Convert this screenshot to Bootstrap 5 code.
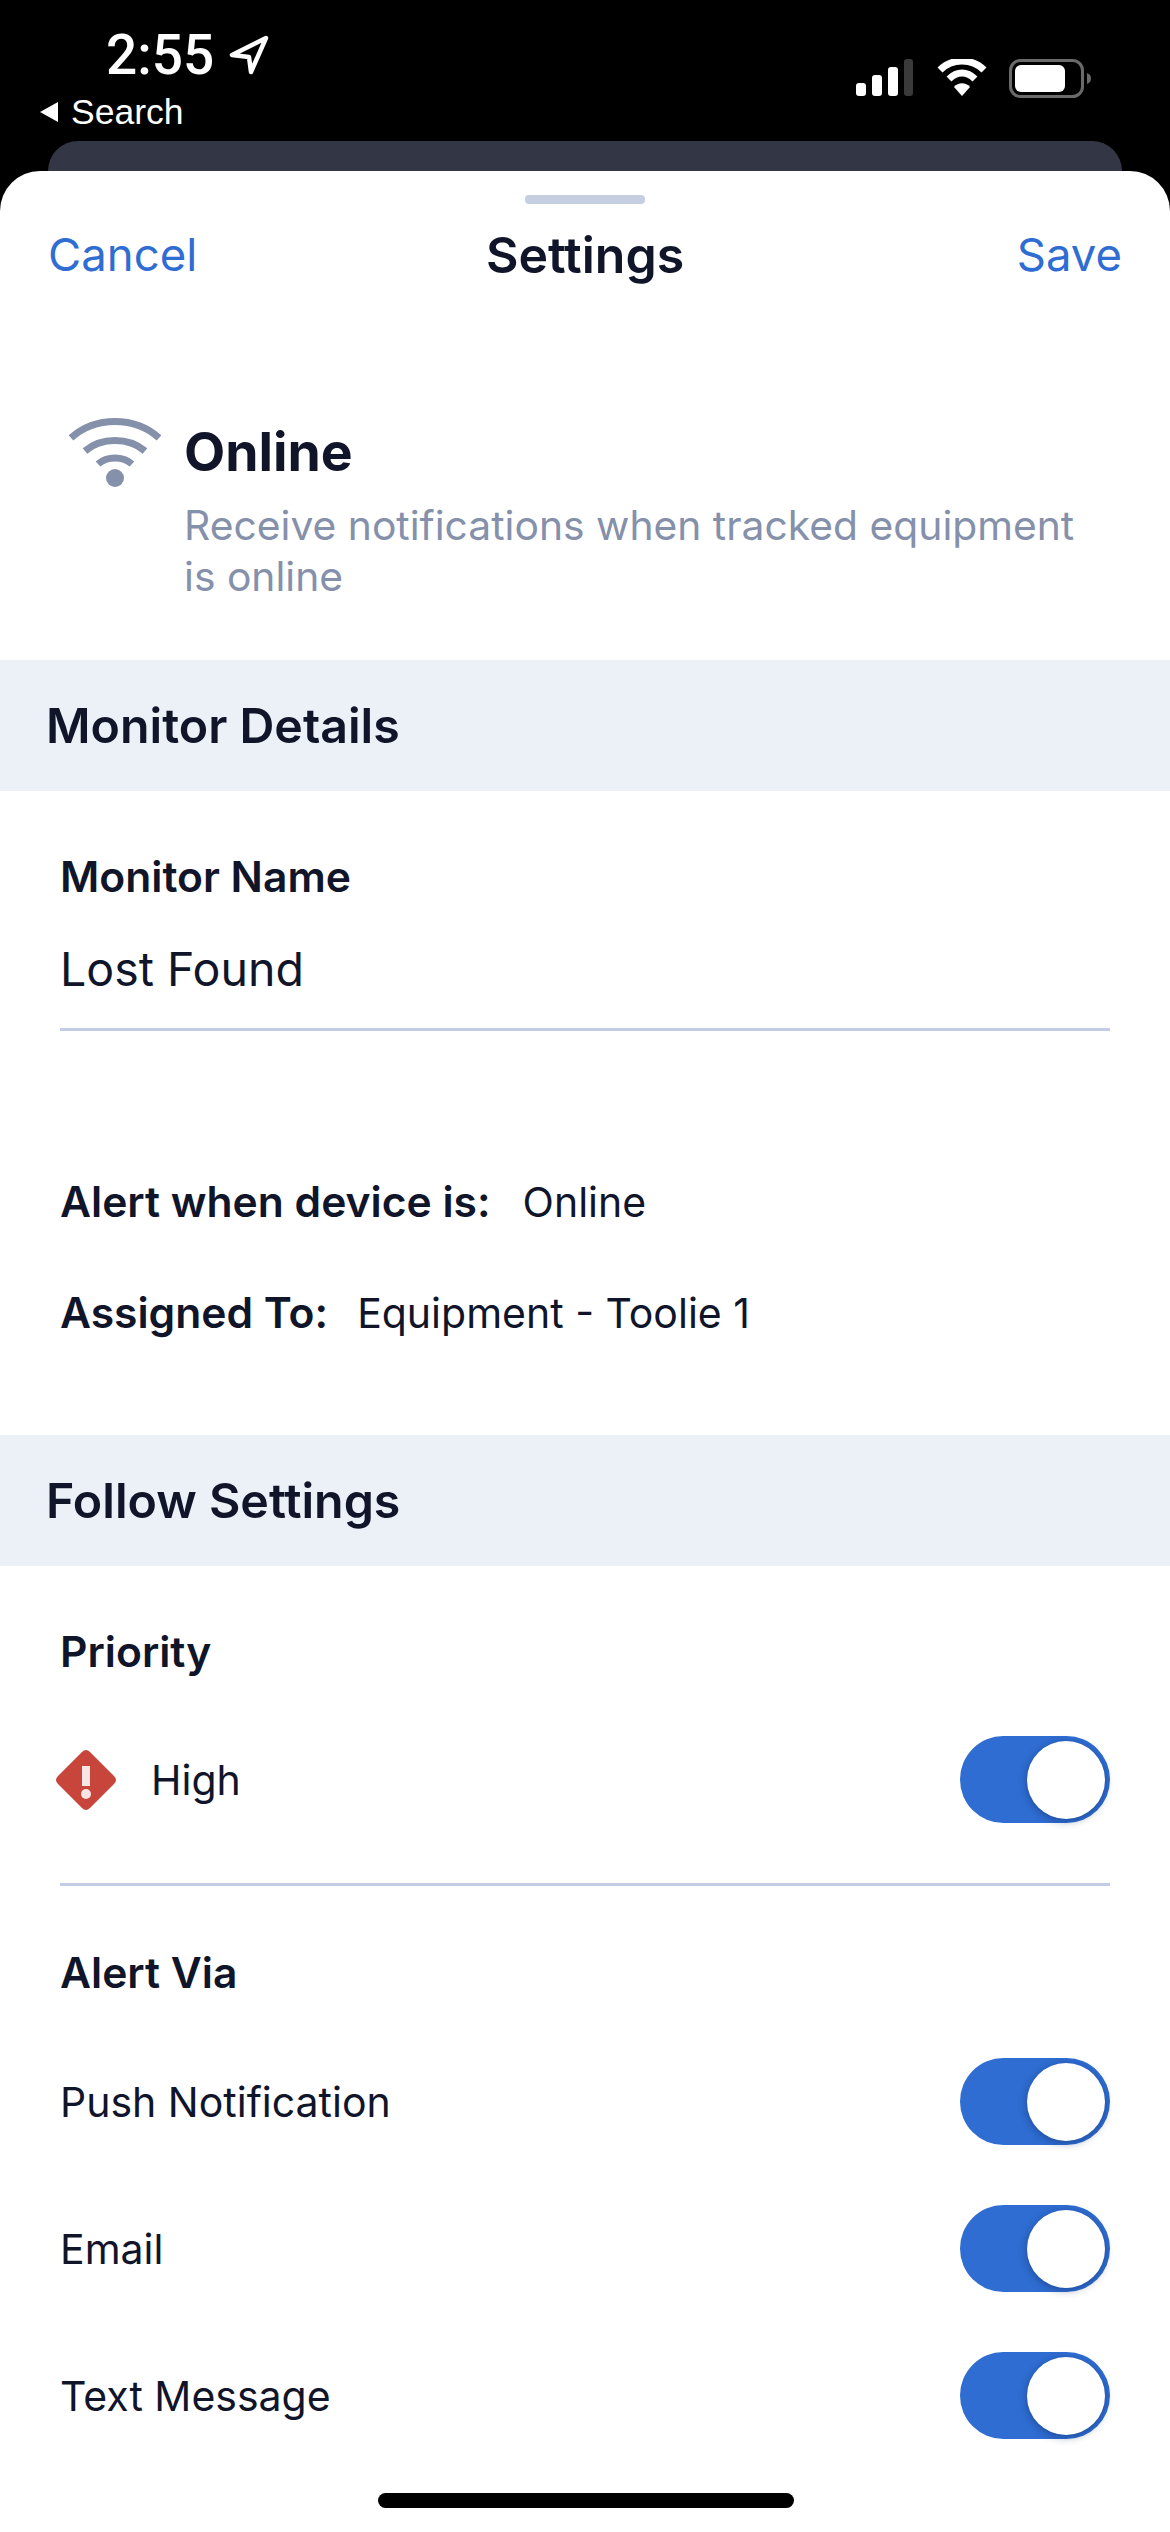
<!DOCTYPE html>
<html lang="en">
<head>
    <meta charset="UTF-8">
    <meta name="viewport" content="width=device-width, initial-scale=1.0">
    <title>Settings</title>
    <link href="https://cdn.jsdelivr.net/npm/bootstrap@5.3.0/dist/css/bootstrap.min.css" rel="stylesheet">
    <style>
        html, body { height: 100%; }
        body { background: #000; font-family: Inter, "Liberation Sans", sans-serif; color: #10152a; overflow: hidden; }

        .phone-top { height: 141px; color: #fff; padding: 35px 79px 0 38px; }
        .clock { font-size: 55px; line-height: 38px; font-weight: 500; margin-left: 68px; font-family: Roboto, sans-serif; }
        .clock svg { margin-left: 14px; }
        .back-link { font-size: 35.5px; line-height: 30px; margin-top: 22px; font-family: "Liberation Sans", sans-serif; }
        .back-link svg { margin-right: 11px; }
        .status-icons { padding-top: 24px; gap: 22px; }
        .status-icons .signal { margin-right: 2px; }
        .peek-card { height: 40px; margin: 0 48px -10px; background: #333644; border-radius: 30px 30px 0 0; }

        .sheet { background: #fff; border-radius: 40px 40px 0 0; height: 2361px; position: relative; }
        .grab { width: 120px; height: 9px; background: #c6cfe1; border-radius: 4px; }
        .grab-wrap { padding-top: 24px; }
        .top-bar { padding: 21px 48px 0 48px; height: 80px; font-size: 45.5px; line-height: 60px; }
        .top-bar a { color: #2f6dd2; text-decoration: none; flex: 1 1 0; }
        .top-bar a:last-child { text-align: right; }
        .top-bar .title-text { font-weight: 600; font-size: 50px; }

        .hero { padding: 131px 50px 0 69px; height: 376px; }
        .hero-icon { width: 92px; height: 70px; margin-top: 2px; flex-shrink: 0; }
        .hero-body { margin-left: 23px; }
        .hero-title { font-size: 53.5px; font-weight: 700; line-height: 60px; margin-top: 7px; }
        .hero-desc { font-size: 40.8px; line-height: 51px; color: #8590ab; margin-top: 18px; width: 900px; }

        .band { background: #ecf0f7; height: 131px; padding-left: 46px; padding-top: 2px; font-size: 48.3px; font-weight: 600; }
        .block { padding: 0 60px; }
        .details-block { height: 644px; padding-top: 61px; }
        .lbl { font-size: 42.6px; font-weight: 600; line-height: 50px; }
        .val { font-size: 41px; line-height: 50px; }
        .name-input { font-size: 46.5px; line-height: 60px; padding-top: 37px; height: 129px; border-bottom: 3px solid #c2cce4; }
        .alert-line { margin-top: 146px; }
        .assigned-line { margin-top: 61px; }
        .alert-val { margin-left: 32px; }
        .assigned-val { margin-left: 29px; }

        .priority-lbl { margin-top: 61px; }
        .priority-row { margin-top: 59px; }
        .prio-icon { margin-left: -4px; }
        .high-text { margin-left: 35px; }
        .rule { margin-top: 60px; border-bottom: 3px solid #c2cce4; }
        .via-lbl { margin-top: 62px; }
        .via-first { margin-top: 60px; }
        .via-next { margin-top: 60px; }

        .toggle-track { width: 150px; height: 87px; border-radius: 44px; background: #2f6dd2; padding: 5px; }
        .toggle-thumb { width: 78px; height: 78px; border-radius: 50%; background: #fff; box-shadow: 0 2px 8px rgba(10, 30, 80, .45); }
        .opt-row { height: 87px; }
        .home-bar { position: absolute; left: 378px; bottom: 24px; width: 416px; height: 15px; background: #000; border-radius: 8px; }
    </style>
</head>
<body>
    <div class="phone-top d-flex justify-content-between">
        <div>
            <div class="clock d-flex align-items-center">
                <span>2:55</span>
                <svg width="42" height="40" viewBox="0 0 42 40"><path d="M38 3 4 20 21 22 23 37Z" fill="none" stroke="#fff" stroke-width="4.5" stroke-linejoin="round"/></svg>
            </div>
            <div class="back-link d-flex align-items-center">
                <svg width="22" height="22" viewBox="0 0 22 22"><path d="M20 1V21L2 11Z" fill="#fff"/></svg>
                <span>Search</span>
            </div>
        </div>
        <div class="status-icons d-flex align-items-start">
            <svg class="signal" width="57" height="37" viewBox="0 0 57 37">
                <rect x="0" y="24" width="10" height="13" rx="3" fill="#fff"/>
                <rect x="16" y="16" width="10" height="21" rx="3" fill="#fff"/>
                <rect x="32" y="8" width="10" height="29" rx="3" fill="#fff"/>
                <rect x="48" y="0" width="9" height="37" rx="3" fill="#3a3a3a"/>
            </svg>
            <svg width="50" height="37" viewBox="0 0 50 37">
                <path d="M3 11C15 -1 35 -1 47 11" fill="none" stroke="#fff" stroke-width="7"/>
                <path d="M12 20C20 12 30 12 38 20" fill="none" stroke="#fff" stroke-width="7"/>
                <path d="M17 28C21 23 29 23 33 28L25 37Z" fill="#fff"/>
            </svg>
            <svg width="82" height="39" viewBox="0 0 82 39">
                <rect x="1.500" y="1.500" width="72" height="36" rx="10" fill="none" stroke="#6a6a6a" stroke-width="3"/>
                <rect x="6" y="6" width="50" height="27" rx="6" fill="#fff"/>
                <path d="M78 14C81 15 82 17 82 19.500C82 22 81 24 78 25Z" fill="#6a6a6a"/>
            </svg>
        </div>
    </div>
    <div class="peek-card"></div>

    <div class="sheet">
        <div class="grab-wrap d-flex justify-content-center"><div class="grab"></div></div>
        <div class="top-bar d-flex justify-content-between">
            <a href="#">Cancel</a>
            <span class="title-text">Settings</span>
            <a href="#">Save</a>
        </div>

        <div class="hero d-flex">
            <svg class="hero-icon" viewBox="0 0 92 70">
                <g fill="none" stroke="#8590ab" stroke-width="7">
                    <path d="M2 21C26 -1 66 -1 90 21"/>
                    <path d="M16 34C32 20 60 20 76 34"/>
                    <path d="M29 47C38 39 54 39 63 47"/>
                </g>
                <circle cx="46" cy="61" r="9" fill="#8590ab"/>
            </svg>
            <div class="hero-body">
                <div class="hero-title">Online</div>
                <div class="hero-desc">Receive notifications when tracked equipment is online</div>
            </div>
        </div>

        <div class="band d-flex align-items-center">Monitor Details</div>
        <div class="block details-block">
            <div class="lbl">Monitor Name</div>
            <div class="name-input">Lost Found</div>
            <div class="alert-line d-flex align-items-center">
                <span class="lbl">Alert when device is:</span><span class="val alert-val">Online</span>
            </div>
            <div class="assigned-line d-flex align-items-center">
                <span class="lbl">Assigned To:</span><span class="val assigned-val">Equipment - Toolie 1</span>
            </div>
        </div>

        <div class="band d-flex align-items-center">Follow Settings</div>
        <div class="block">
            <div class="lbl priority-lbl">Priority</div>
            <div class="opt-row priority-row d-flex align-items-center justify-content-between">
                <div class="d-flex align-items-center">
                    <svg class="prio-icon" width="60" height="60" viewBox="0 0 60 60">
                        <path d="M26 2 2 26Q-2 30 2 34L26 58Q30 62 34 58L58 34Q62 30 58 26L34 2Q30 -2 26 2Z" fill="#c8453c"/>
                        <rect x="26" y="16" width="8" height="20" fill="#f7e6e4"/>
                        <circle cx="30" cy="44" r="5" fill="#f7e6e4"/>
                    </svg>
                    <span class="val high-text">High</span>
                </div>
                <div class="toggle-track d-flex justify-content-end"><div class="toggle-thumb"></div></div>
            </div>
            <div class="rule"></div>
            <div class="lbl via-lbl">Alert Via</div>
            <div class="opt-row via-first d-flex align-items-center justify-content-between">
                <span class="val">Push Notification</span>
                <div class="toggle-track d-flex justify-content-end"><div class="toggle-thumb"></div></div>
            </div>
            <div class="opt-row via-next d-flex align-items-center justify-content-between">
                <span class="val">Email</span>
                <div class="toggle-track d-flex justify-content-end"><div class="toggle-thumb"></div></div>
            </div>
            <div class="opt-row via-next d-flex align-items-center justify-content-between">
                <span class="val">Text Message</span>
                <div class="toggle-track d-flex justify-content-end"><div class="toggle-thumb"></div></div>
            </div>
        </div>
        <div class="home-bar"></div>
    </div>
</body>
</html>
